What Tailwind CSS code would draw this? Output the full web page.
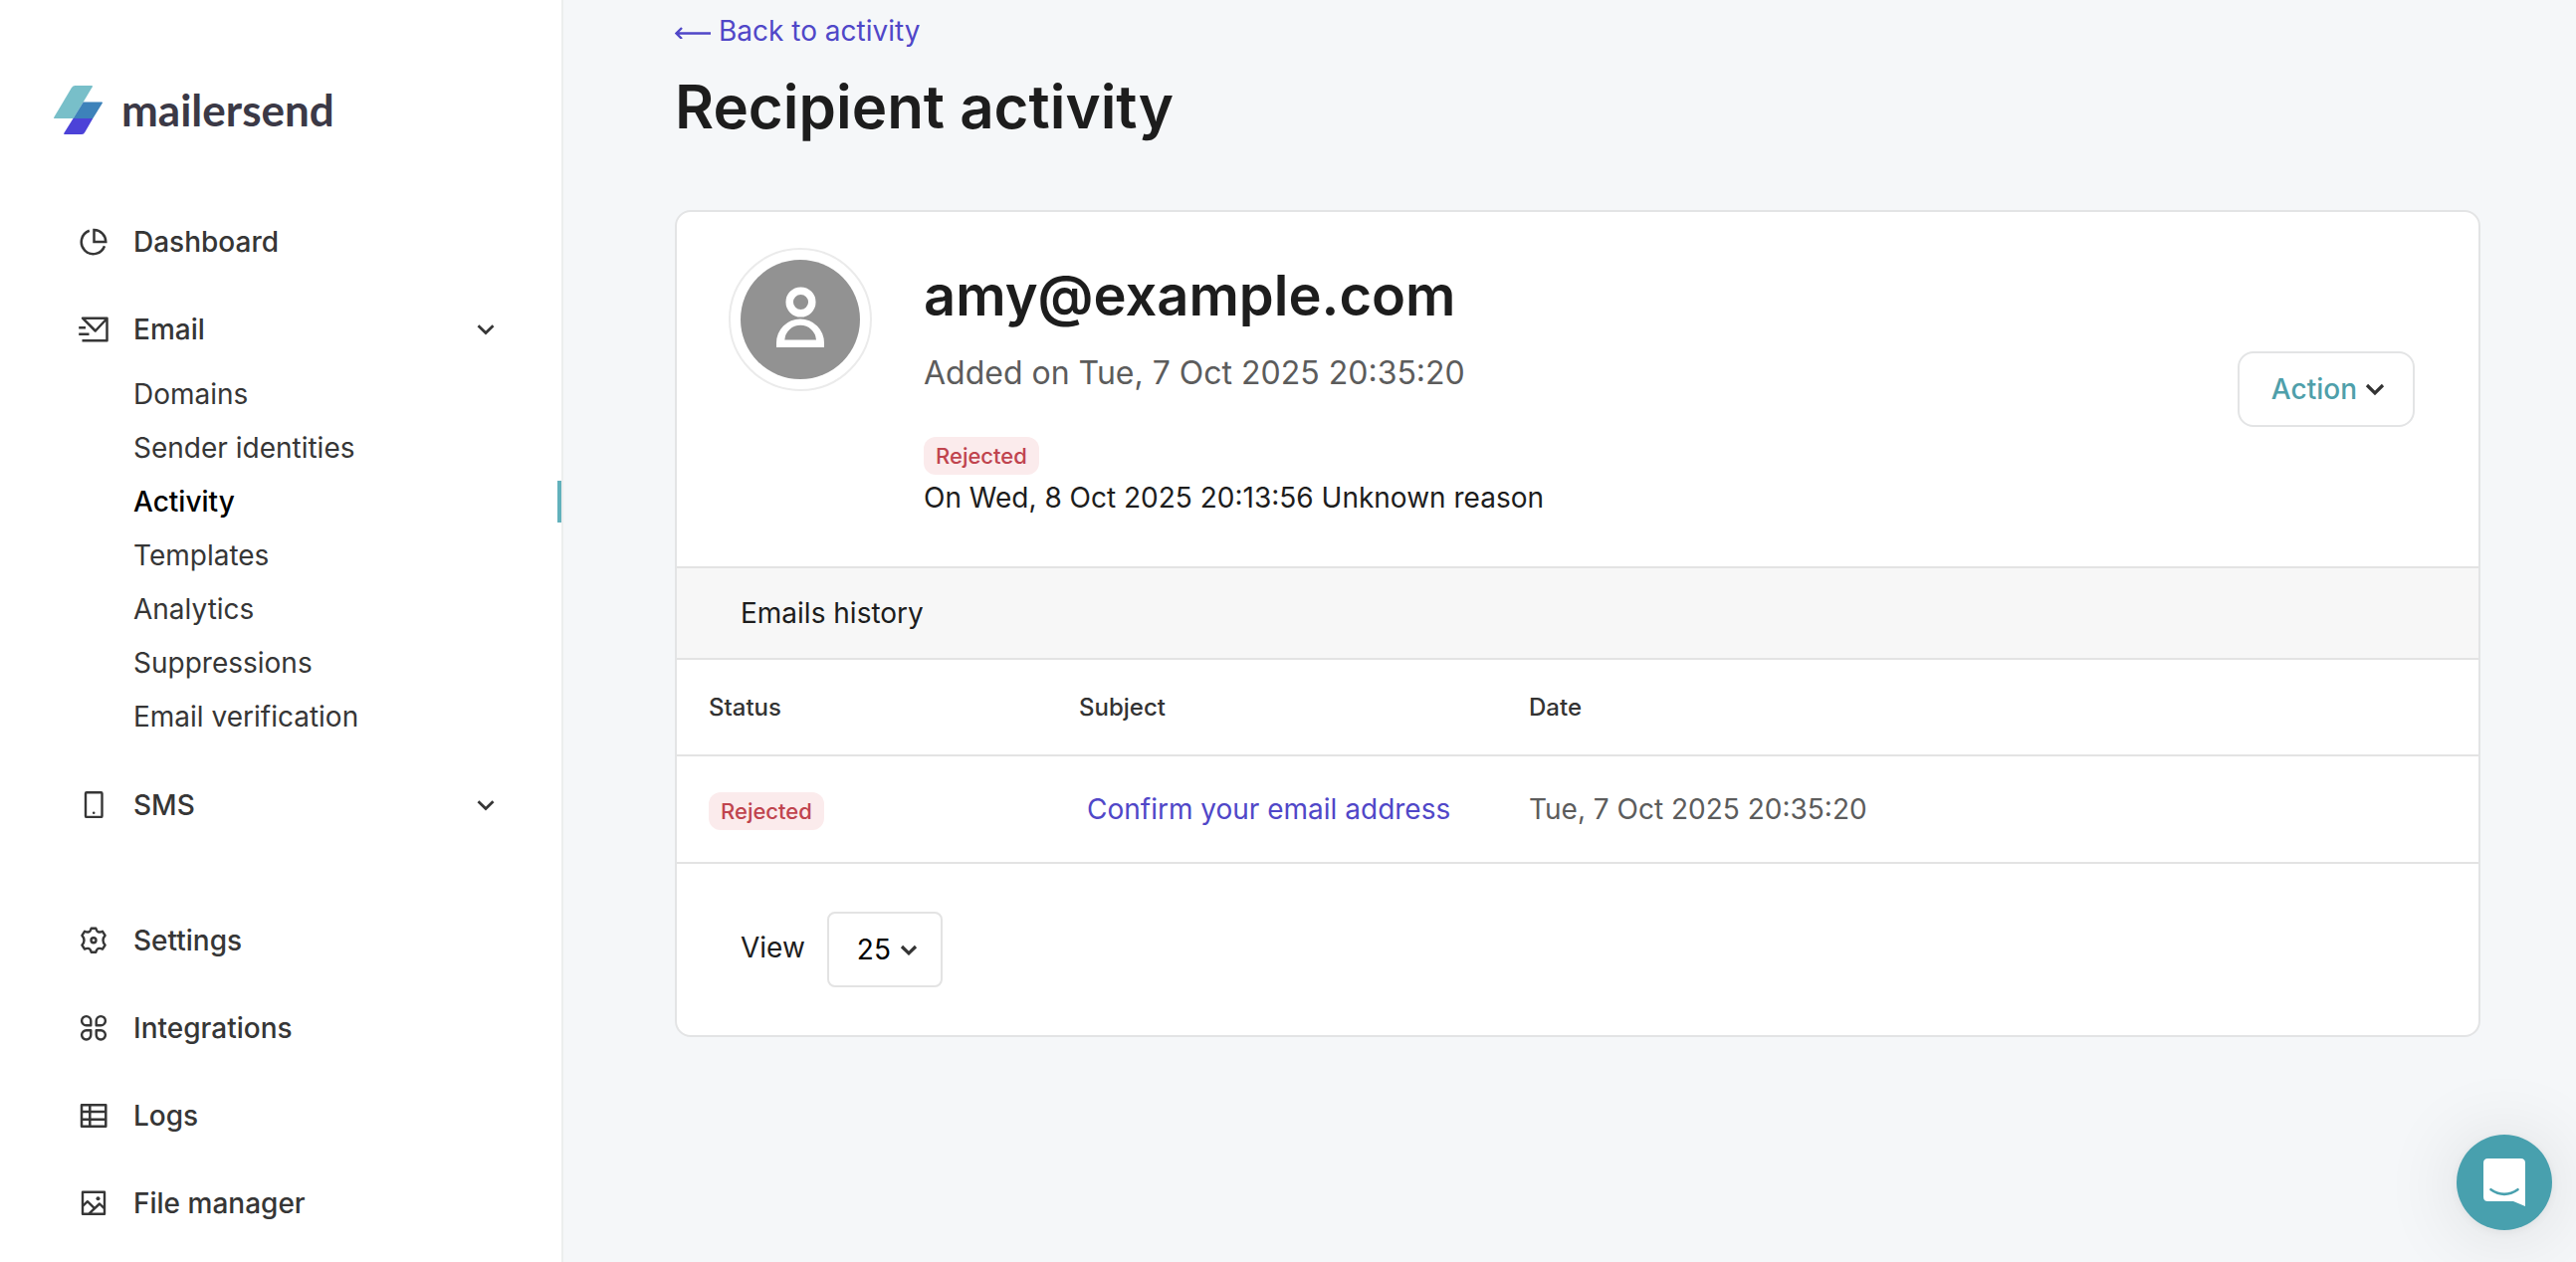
<!DOCTYPE html>
<html lang="en">
<head>
<meta charset="utf-8">
<meta name="viewport" content="width=device-width, initial-scale=1">
<title>Recipient activity</title>
<script src="https://cdn.jsdelivr.net/npm/@tailwindcss/browser@4"></script>
</head>
<body class="flex min-h-screen bg-[#f5f7f9] font-['Inter',sans-serif] text-[28px] text-[#1d1d1d]">

<aside class="w-[566px] shrink-0 border-r-2 border-[#eceeee] bg-white pt-[85px] text-[#363636]">
  <a href="#" class="ml-[54px] flex h-[50px] items-center gap-[18px]">
    <svg class="size-[50px] shrink-0" viewBox="0 0 50 50" aria-hidden="true">
      <path fill="#78bfc9" d="M21.500 1H38q1.500 0 .8 1.300L29.700 17.500 19.500 34H1q-1.400 0-.7-1.200L18 3q1.200-2 3.500-2Z"/>
      <path fill="#3d82ba" d="M29.700 17.500H48q1.500 0 .8 1.300L39.300 34H19.500Z"/>
      <path fill="#4c42d8" d="M19.500 34H39.300L31.500 47.500Q30.300 50 28 50H11q-1.400 0-.7-1.200Z"/>
    </svg>
    <span class="font-['Lato',sans-serif] text-[44px] leading-[50px] font-bold text-[#3b3946]">mailersend</span>
  </a>

  <nav class="mt-[86px] font-medium" aria-label="Main">
    <ul class="flex flex-col gap-11">
      <li>
        <a href="#" class="flex h-11 items-center gap-6 pl-[78px]">
          <svg class="size-8" viewBox="0 0 32 32" fill="none" stroke="currentColor" stroke-width="2.500" aria-hidden="true"><path d="M16.500 4V16H28.300A12 12 0 0 0 16.500 4ZM11.800 4.800A12 12 0 1 0 27 20.300"/></svg>
          Dashboard
        </a>
      </li>
      <li>
        <button type="button" class="flex h-11 w-full items-center gap-6 pr-[66px] pl-[78px] text-left">
          <svg class="size-8" viewBox="0 0 32 32" fill="none" stroke="currentColor" stroke-width="2.500" stroke-linejoin="round" aria-hidden="true"><path d="M4.500 27.300H29.500V4.700H5L17.800 17.500 29.500 5M1.200 14.300H8M1.200 20.700H11.500"/></svg>
          <span class="grow">Email</span>
          <svg class="h-3 w-5" viewBox="0 0 20 12" fill="none" stroke="currentColor" stroke-width="2.700" aria-hidden="true"><path d="M2.500 2.200 10 9.500 17.500 2.200"/></svg>
        </button>
        <ul class="pt-4 font-normal">
          <li><a href="#" class="flex h-[54px] items-center pl-[134px]">Domains</a></li>
          <li><a href="#" class="flex h-[54px] items-center pl-[134px]">Sender identities</a></li>
          <li><a href="#" aria-current="page" class="flex h-[54px] items-center justify-between pl-[134px] font-medium text-black">Activity<span class="h-[42px] w-1 bg-[#62b1bc]"></span></a></li>
          <li><a href="#" class="flex h-[54px] items-center pl-[134px]">Templates</a></li>
          <li><a href="#" class="flex h-[54px] items-center pl-[134px]">Analytics</a></li>
          <li><a href="#" class="flex h-[54px] items-center pl-[134px]">Suppressions</a></li>
          <li><a href="#" class="flex h-[54px] items-center pl-[134px]">Email verification</a></li>
        </ul>
      </li>
      <li class="-mt-1">
        <button type="button" class="flex h-11 w-full items-center gap-6 pr-[66px] pl-[78px] text-left">
          <svg class="size-8" viewBox="0 0 32 32" fill="none" stroke="currentColor" stroke-width="2.400" aria-hidden="true"><rect x="8" y="3.300" width="16.500" height="24.600" rx="1"/><circle cx="16.200" cy="23.700" r="1.300" fill="currentColor" stroke="none"/></svg>
          <span class="grow">SMS</span>
          <svg class="h-3 w-5" viewBox="0 0 20 12" fill="none" stroke="currentColor" stroke-width="2.700" aria-hidden="true"><path d="M2.500 2.200 10 9.500 17.500 2.200"/></svg>
        </button>
      </li>
    </ul>
    <ul class="mt-[92px] flex flex-col gap-11">
      <li>
        <a href="#" class="flex h-11 items-center gap-6 pl-[78px]">
          <svg class="size-8" viewBox="0 0 32 32" fill="none" stroke="currentColor" stroke-width="2.400" stroke-linejoin="round" aria-hidden="true"><g transform="translate(16 15.700)"><path d="M-2.300-12H2.300Q3.200-8.600 5.300-8.200Q7-7.900 9-8.900L11.600-4.800Q9.500-2.500 9.500 0Q9.500 2.500 11.600 4.800L9 8.900Q7 7.900 5.300 8.200Q3.200 8.600 2.300 12H-2.300Q-3.200 8.600-5.300 8.200Q-7 7.900-9 8.900L-11.600 4.800Q-9.500 2.500-9.500 0Q-9.500-2.500-11.600-4.800L-9-8.900Q-7-7.900-5.300-8.200Q-3.200-8.600-2.300-12Z"/><circle r="2.500"/></g></svg>
          Settings
        </a>
      </li>
      <li>
        <a href="#" class="flex h-11 items-center gap-6 pl-[78px]">
          <svg class="size-8" viewBox="0 0 32 32" fill="none" stroke="currentColor" stroke-width="2.400" stroke-linejoin="round" aria-hidden="true"><path d="M13.300 13.300H8.800A4.600 4.600 0 1 1 13.300 8.800ZM18.700 13.300H23.200A4.600 4.600 0 1 0 18.700 8.800ZM13.300 18.300H8.800A4.600 4.600 0 1 0 13.300 22.800ZM18.700 18.300H23.200A4.600 4.600 0 1 1 18.700 22.800Z"/></svg>
          Integrations
        </a>
      </li>
      <li>
        <a href="#" class="flex h-11 items-center gap-6 pl-[78px]">
          <svg class="size-8" viewBox="0 0 32 32" fill="none" stroke="currentColor" stroke-width="2.500" stroke-linejoin="round" aria-hidden="true"><path d="M4 5.200H28.300V26.700H4ZM4 12H28.300M4 19.700H28.300M12.300 5.200V26.700"/></svg>
          Logs
        </a>
      </li>
      <li>
        <a href="#" class="flex h-11 items-center gap-6 pl-[78px]">
          <svg class="size-8" viewBox="0 0 32 32" fill="none" stroke="currentColor" stroke-width="2.400" stroke-linejoin="round" aria-hidden="true"><path d="M5 4.800H27V26.800H5ZM5 19 9.900 14.200 16.700 20.800M11 26.800 22 16.500 27 21.300"/><circle cx="20.500" cy="11.200" r="2" fill="currentColor" stroke="none"/></svg>
          File manager
        </a>
      </li>
    </ul>
  </nav>
</aside>

<main class="grow pt-[11px] pr-24 pb-24 pl-28">
  <a href="#" class="flex h-10 w-fit items-center gap-2 text-[#5047c8]">
    <svg class="h-4 w-9" viewBox="0 0 36 16" fill="none" stroke="currentColor" stroke-width="2.400" aria-hidden="true"><path d="M36 10.500H2M7 5 1.500 10.500 7 16"/></svg>
    Back to activity
  </a>
  <h1 class="mt-5 text-[60px] leading-[72px] font-semibold">Recipient activity</h1>

  <section class="mt-[68px] overflow-hidden rounded-2xl border-2 border-[#e3e4e5] bg-white">
    <header class="flex items-center pr-16 pl-[52px]">
      <div class="mt-9 flex size-36 shrink-0 items-center justify-center self-start rounded-full border-2 border-[#ebebeb]">
        <svg class="size-[120px]" viewBox="0 0 120 120" role="img" aria-label="Recipient">
          <circle cx="60" cy="60" r="60" fill="#929292"/>
          <circle cx="60.500" cy="42.500" r="11.300" fill="none" stroke="#fff" stroke-width="7.500"/>
          <path fill="#fff" fill-rule="evenodd" d="M36 88V83.500a24 24 0 0 1 48 0V88ZM44.300 80.500H76a15.900 15.900 0 0 0-31.700 0Z"/>
        </svg>
      </div>
      <div class="ml-[52px] grow py-[50px]">
        <h2 class="text-[56px] leading-[68px] font-semibold">amy@example.com</h2>
        <p class="mt-6 text-[32px] leading-10 text-[#5c5c5c]">Added on Tue, 7 Oct 2025 20:35:20</p>
        <span class="mt-11 flex h-[38px] w-fit items-center rounded-xl bg-[#fbebec] px-3 text-[22px] font-medium text-[#c0444e]">Rejected</span>
        <p class="mt-1 leading-[38px]">On Wed, 8 Oct 2025 20:13:56 Unknown reason</p>
      </div>
      <button type="button" class="flex h-[76px] items-center gap-2 rounded-2xl border-2 border-[#e3e4e5] pr-7 pl-8 font-medium text-[#4f9faa]">
        Action
        <svg class="h-4 w-5" viewBox="0 0 20 16" fill="none" stroke="#333" stroke-width="3.200" aria-hidden="true"><path d="M2 4 10 12 18 4"/></svg>
      </button>
    </header>

    <h3 class="flex h-[94px] items-center border-y-2 border-[#e3e3e3] bg-[#f7f7f7] pl-16">Emails history</h3>

    <table class="w-full table-fixed text-left">
      <thead>
        <tr class="h-24 border-b-2 border-[#e3e3e3] text-[24px] text-[#333]">
          <th scope="col" class="w-[372px] pl-8 font-medium">Status</th>
          <th scope="col" class="w-[452px] pl-8 font-medium">Subject</th>
          <th scope="col" class="pl-8 font-medium">Date</th>
        </tr>
      </thead>
      <tbody>
        <tr class="h-[108px] border-b-2 border-[#e3e3e3]">
          <td class="pt-1 pl-8"><span class="flex h-[38px] w-fit items-center rounded-xl bg-[#fbebec] px-3 text-[22px] font-medium text-[#c0444e]">Rejected</span></td>
          <td class="pl-10"><a href="#" class="whitespace-nowrap text-[#5047c8]">Confirm your email address</a></td>
          <td class="pl-8 text-[#5c5c5c]">Tue, 7 Oct 2025 20:35:20</td>
        </tr>
      </tbody>
    </table>

    <footer class="flex items-center gap-[22px] py-12 pl-16">
      <label for="page-size" class="pb-1">View</label>
      <div class="relative">
        <select id="page-size" class="h-[76px] w-[116px] appearance-none rounded-lg border-2 border-[#e3e3e3] bg-white pl-7 text-black">
          <option>25</option>
          <option>50</option>
          <option>100</option>
        </select>
        <svg class="pointer-events-none absolute top-8 right-6 h-3 w-5" viewBox="0 0 20 12" fill="none" stroke="#333" stroke-width="3.200" aria-hidden="true"><path d="M3 3 10 9.800 17 3"/></svg>
      </div>
    </footer>
  </section>
</main>

<button type="button" aria-label="Open chat" class="fixed right-6 bottom-8 size-24 rounded-full bg-[#48a0ae] shadow-[0_2px_12px_rgb(0_0_0/0.06),0_4px_80px_rgb(0_0_0/0.12)]">
  <svg class="size-24" viewBox="0 0 96 96" aria-hidden="true">
    <path fill="#fff" d="M31.500 24H64.500Q69 24 69 28.500V72L57 67H31.500Q27 67 27 62.500V28.500Q27 24 31.500 24Z"/>
    <path d="M34.500 55.200Q48 64.500 61.500 55.200" fill="none" stroke="#48a0ae" stroke-width="2.600" stroke-linecap="round"/>
  </svg>
</button>
</body>
</html>
